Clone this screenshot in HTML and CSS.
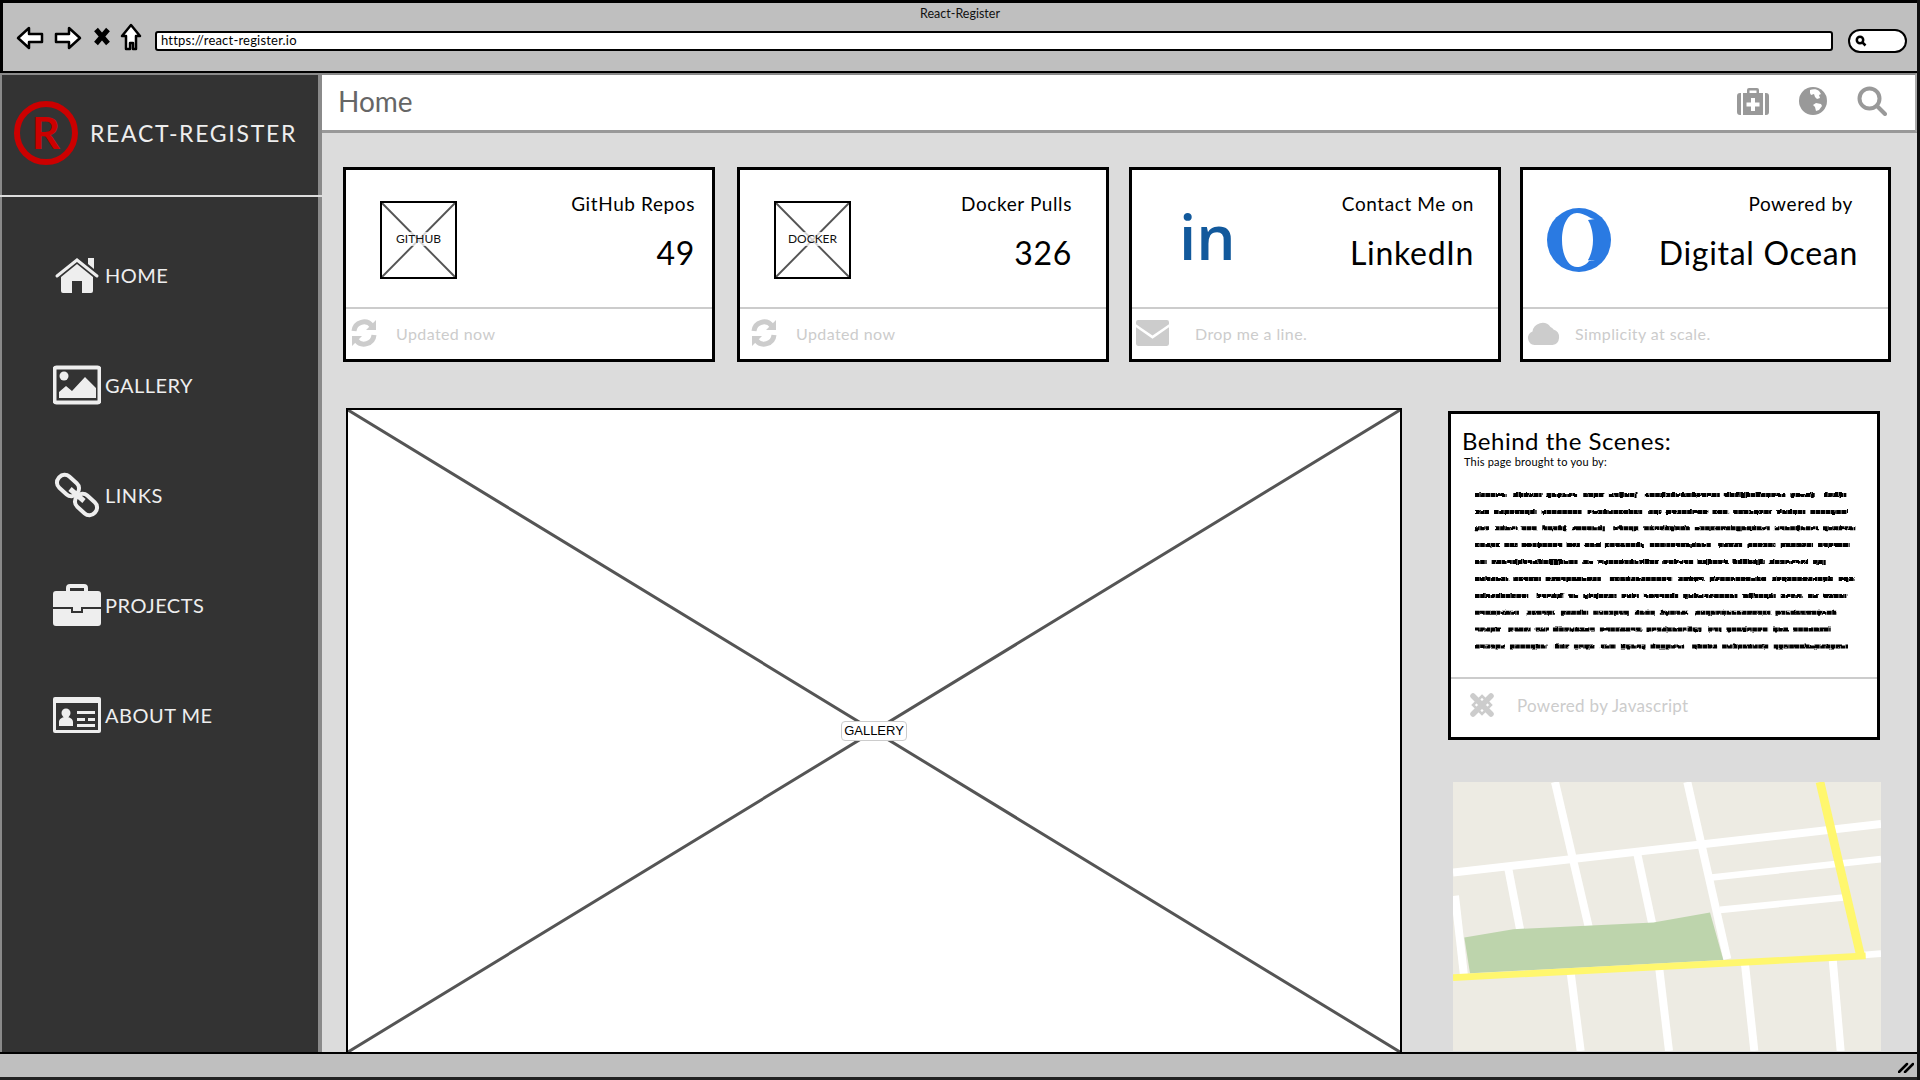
FILE: index.html
```html
<!DOCTYPE html>
<html lang="en">
<head>
  <meta charset="UTF-8" />
  <meta name="viewport" content="width=device-width, initial-scale=1.0" />
  <title>React-Register</title>
  <link rel="stylesheet" href="styles.css">
</head>
<body>
<div class="window">

  <!-- Browser chrome -->
  <header class="toolbar">
    <div class="toolbar-title">React-Register</div>
    <div class="toolbar-row">
      <svg class="tb-back" viewBox="0 0 28 24"><path d="M2 12 13 2v6h13v8H13v6z"/></svg>
      <svg class="tb-forward" viewBox="0 0 28 24"><path d="M26 12 15 2v6H2v8h13v6z"/></svg>
      <svg class="tb-close" viewBox="0 0 16 18"><path d="M2 2 14 16M14 2 2 16"/></svg>
      <svg class="tb-home" viewBox="0 0 22 28"><path d="M11 2 2 13h4v13h4v-6h3v6h3V13h4z"/></svg>
      <div class="url-bar">https://react-register.io</div>
      <div class="search-pill">
        <svg viewBox="0 0 12 12"><circle cx="5" cy="5" r="3.2"/><path d="m7.5 7.5 3 3"/></svg>
      </div>
    </div>
  </header>

  <div class="app">

    <!-- Sidebar -->
    <aside class="sidebar">
      <div class="brand">
        <div class="brand-logo">R</div>
        <div class="brand-name">REACT-REGISTER</div>
      </div>
      <nav class="nav">
        <a class="nav-item">
          <svg class="nav-icon" viewBox="0 0 48 40"><path d="M8 22 24 9l16 13v14a2 2 0 0 1-2 2H29V26H19v12H10a2 2 0 0 1-2-2z"/><path d="M35 3h6v11l-6-5z"/><path class="nav-roof" d="M4 21 24 5l20 16"/></svg>
          <span>HOME</span>
        </a>
        <a class="nav-item">
          <svg class="nav-icon" viewBox="0 0 48 38"><rect class="nav-frame" x="1.5" y="1.5" width="45" height="35" rx="2"/><circle cx="11" cy="10" r="4.5"/><path d="M6 32v-6l7-6 6 5 13-14 11 11v10z"/></svg>
          <span>GALLERY</span>
        </a>
        <a class="nav-item">
          <svg class="nav-icon" viewBox="0 0 48 46"><g class="nav-frame"><rect x="3" y="6" width="24" height="15" rx="7" transform="rotate(42 15 13.5)"/><rect x="21" y="25" width="24" height="15" rx="7" transform="rotate(42 33 32.5)"/></g><path class="nav-link" d="m17 17 14 12"/></svg>
          <span>LINKS</span>
        </a>
        <a class="nav-item">
          <svg class="nav-icon" viewBox="0 0 48 42"><path class="nav-frame" d="M15 8V4a2 2 0 0 1 2-2h14a2 2 0 0 1 2 2v4"/><path d="M0 10a3 3 0 0 1 3-3h42a3 3 0 0 1 3 3v13H0zM0 25h18v4h12v-4h18v14a3 3 0 0 1-3 3H3a3 3 0 0 1-3-3z"/><path d="M20 23h8v4h-8z"/></svg>
          <span>PROJECTS</span>
        </a>
        <a class="nav-item">
          <svg class="nav-icon" viewBox="0 0 48 36"><rect width="48" height="36" rx="2"/><rect class="nav-hole" x="3" y="6" width="42" height="27"/><circle cx="13" cy="16" r="4.5"/><path d="M6 29v-4c0-3 3-5 7-5s7 2 7 5v4zM24 14h18v3H24zM24 21h8v3h-8zM35 21h7v3h-7zM24 27h18v3H24z"/></svg>
          <span>ABOUT ME</span>
        </a>
      </nav>
    </aside>

    <main class="content">
      <div class="topbar">
        <h1 class="topbar-title">Home</h1>
        <div class="topbar-icons">
          <svg class="tb-icon" viewBox="0 0 32 28"><path d="M10 6V3a2 2 0 0 1 2-2h8a2 2 0 0 1 2 2v3h-2.500V3.500h-7V6z"/><path d="M0 9a3 3 0 0 1 3-3h1v22H3a3 3 0 0 1-3-3zM6 6h20v22H6zM28 6h1a3 3 0 0 1 3 3v16a3 3 0 0 1-3 3h-1z"/><path class="tb-cross" d="M14 11h4v4.500h4.500v4H18V24h-4v-4.500H9.500v-4H14z"/></svg>
          <svg class="tb-icon tb-globe" viewBox="0 0 28 28"><circle cx="14" cy="14" r="14"/><path class="tb-cross" d="M11 3c3-1 7-1 9 1l2 3-2 1 1 3-3 1-2-2-1-3-3 1-1-2zM17 16l5 1 1 2-3 4-3 1-1-4-2-2z"/></svg>
          <svg class="tb-icon tb-search" viewBox="0 0 30 30"><circle cx="12.500" cy="12.500" r="10"/><path d="m20 20 8 8"/></svg>
        </div>
      </div>

      <section class="stats">
        <article class="stat-card stat-github">
          <div class="stat-main">
            <div class="thumb">
              <svg viewBox="0 0 75 77" preserveAspectRatio="none"><path d="M0 0 75 77M75 0 0 77"/></svg>
              <span class="thumb-label">GITHUB</span>
            </div>
            <div class="stat-text">
              <div class="stat-label">GitHub Repos</div>
              <div class="stat-value">49</div>
            </div>
          </div>
          <div class="stat-foot">
            <svg class="foot-icon" viewBox="0 0 28 28"><path class="foot-line" d="M4 12a10 10 0 0 1 18-5M24 16a10 10 0 0 1-18 5"/><path d="m26 1 0 10-10 0zM2 27l0-10 10 0z"/></svg>
            <span>Updated now</span>
          </div>
        </article>

        <article class="stat-card stat-docker">
          <div class="stat-main">
            <div class="thumb">
              <svg viewBox="0 0 75 77" preserveAspectRatio="none"><path d="M0 0 75 77M75 0 0 77"/></svg>
              <span class="thumb-label">DOCKER</span>
            </div>
            <div class="stat-text">
              <div class="stat-label">Docker Pulls</div>
              <div class="stat-value">326</div>
            </div>
          </div>
          <div class="stat-foot">
            <svg class="foot-icon" viewBox="0 0 28 28"><path class="foot-line" d="M4 12a10 10 0 0 1 18-5M24 16a10 10 0 0 1-18 5"/><path d="m26 1 0 10-10 0zM2 27l0-10 10 0z"/></svg>
            <span>Updated now</span>
          </div>
        </article>

        <article class="stat-card stat-linkedin">
          <div class="stat-main">
            <div class="linkedin-mark">in</div>
            <div class="stat-text">
              <div class="stat-label">Contact Me on</div>
              <div class="stat-value">LinkedIn</div>
            </div>
          </div>
          <div class="stat-foot">
            <svg class="foot-icon foot-mail" viewBox="0 0 32 25"><path d="M2 0h28a2 2 0 0 1 2 2v2L16 15 0 4V2a2 2 0 0 1 2-2zM0 7l16 11L32 7v16a2 2 0 0 1-2 2H2a2 2 0 0 1-2-2z"/></svg>
            <span>Drop me a line.</span>
          </div>
        </article>

        <article class="stat-card stat-ocean">
          <div class="stat-main">
            <svg class="ocean-mark" viewBox="0 0 64 64"><ellipse cx="32" cy="32" rx="32" ry="32"/><path class="ocean-cut" d="M30 5C21 5 15 17 15 32s6 27 15 27c4 0 9-2 12-6l6-1c-4 0-7 1-7 0 3-5 5-12 5-20s-2-15-5-20l7-1c-3 1-10-6-18-6z"/></svg>
            <div class="stat-text">
              <div class="stat-label">Powered by</div>
              <div class="stat-value">Digital Ocean</div>
            </div>
          </div>
          <div class="stat-foot">
            <svg class="foot-icon foot-cloud" viewBox="0 0 32 24"><path d="M7 24a7 7 0 0 1-2-13.500A10 10 0 0 1 23 6a7 7 0 0 1 3 2.500A8 8 0 0 1 25 24z"/></svg>
            <span>Simplicity at scale.</span>
          </div>
        </article>
      </section>

      <section class="lower">
        <div class="gallery">
          <svg viewBox="0 0 1056 643" preserveAspectRatio="none"><path d="M0 0 1056 643M1056 0 0 643"/></svg>
          <span class="gallery-label">GALLERY</span>
        </div>

        <div class="side">
          <article class="scenes-card">
            <div class="scenes-body">
              <h2 class="scenes-title">Behind the Scenes:</h2>
              <div class="scenes-sub">This page brought to you by:</div>
              <!-- scribbled placeholder copy -->
              <svg class="scribble" viewBox="124 270 1156 486">
                <filter id="wobble" filterUnits="userSpaceOnUse" x="110" y="260" width="1190" height="510">
                  <feTurbulence type="fractalNoise" baseFrequency="0.07" numOctaves="1" seed="4"/>
                  <feDisplacementMap in="SourceGraphic" scale="9" xChannelSelector="R" yChannelSelector="G"/>
                </filter>
                <g filter="url(#wobble)">
                  <path d="M130 285H225M245 285H330M345 285H437M455 285H517M532 285H615M640 285H865M880 285H1062M1077 285H1150M1175 285H1245"/>
                  <path d="M130 336H172M187 336H315M330 336H450M468 336H632M650 336H690M705 336H828M843 336H890M905 336H1022M1037 336H1122M1137 336H1250"/>
                  <path d="M130 385H172M190 385H258M270 385H315M332 385H405M420 385H520M545 385H620M638 385H775M790 385H1015M1030 385H1160M1175 385H1272"/>
                  <path d="M130 435H205M218 435H258M270 435H392M405 435H445M460 435H505M520 435H640M655 435H835M860 435H932M948 435H1032M1048 435H1145M1160 435H1255"/>
                  <path d="M130 486H165M180 486H438M455 486H485M500 486H680M695 486H785M798 486H890M903 486H1000M1015 486H1130M1145 486H1183"/>
                  <path d="M130 537H230M245 537H328M342 537H508M535 537H722M740 537H820M835 537H1005M1020 537H1205M1222 537H1270"/>
                  <path d="M130 588H290M315 588H395M410 588H440M455 588H555M570 588H622M637 588H740M755 588H918M935 588H1033M1048 588H1112M1130 588H1160M1177 588H1245"/>
                  <path d="M130 638H262M285 638H370M388 638H470M485 638H592M610 638H670M685 638H770M792 638H1017M1032 638H1215"/>
                  <path d="M130 689H205M230 689H297M312 689H352M367 689H490M505 689H630M645 689H810M830 689H870M885 689H1010M1025 689H1070M1085 689H1198"/>
                  <path d="M130 740H220M235 740H345M370 740H410M427 740H490M505 740H553M568 740H642M657 740H758M782 740H857M872 740H1012M1027 740H1250"/>
                </g>
              </svg>
            </div>
            <div class="stat-foot scenes-foot">
              <svg class="foot-icon foot-joomla" viewBox="0 0 28 28"><path class="foot-knot" d="M5 5 23 23M23 5 5 23"/><path class="foot-diamond" d="M14 5 23 14 14 23 5 14z"/></svg>
              <span>Powered by Javascript</span>
            </div>
          </article>

          <svg class="map" viewBox="69 69 1284 806" preserveAspectRatio="none">
            <rect x="69" y="69" width="1284" height="806" fill="#edebe3"/>
            <g fill="none" stroke="#fff" stroke-width="24">
              <path d="M69 340 1353 195"/>
              <path d="M375 69 480 520"/>
              <path d="M772 69 892 600"/>
              <path d="M235 330 272 520"/>
              <path d="M622 285 668 500"/>
              <path d="M845 355 1353 300" stroke-width="20"/>
              <path d="M870 452 1240 415" stroke-width="20"/>
              <path d="M75 410 102 650"/>
              <path d="M422 640 452 875"/>
              <path d="M688 630 717 875"/>
              <path d="M945 615 973 875"/>
              <path d="M1208 600 1232 875"/>
              <path d="M1290 588 1353 583" stroke-width="20"/>
            </g>
            <path d="M103 535 250 510 670 490 840 460 880 602 120 642z" fill="#bdd4ac"/>
            <g fill="none" stroke="#fff76e">
              <path d="M1170 69 1293 595" stroke-width="26"/>
              <path d="M69 655 1307 590" stroke-width="20"/>
            </g>
          </svg>
        </div>
      </section>
    </main>
  </div>

  <footer class="statusbar">
    <svg viewBox="0 0 16 12"><path d="M1 11 9 3M7 11l8-8"/></svg>
  </footer>
</div>
</body>
</html>
```

FILE: styles.css
```css
* {
  box-sizing: border-box;
}

body {
  margin: 0;
  font-family: 'Lato', 'Open Sans', sans-serif;
  color: #000;
  background: #dcdcdc;
}

.window {
  display: flex;
  flex-direction: column;
  height: 1080px;
  overflow: hidden;
  border-right: 3px solid #111;
}

/* Browser chrome */
.toolbar {
  height: 73px;
  flex: none;
  background: #bfbfbf;
  border: 3px solid #000;
  border-right: 0;
  border-bottom-width: 2px;
}

.toolbar-title {
  height: 19px;
  line-height: 21px;
  text-align: center;
  font-size: 12.500px;
  color: #111;
}

.toolbar-row {
  display: flex;
  align-items: center;
  height: 30px;
  margin-top: 2px;
  padding-left: 13px;
}

.toolbar-row svg {
  flex: none;
  fill: #fff;
  stroke: #000;
  stroke-width: 2.500;
  stroke-linejoin: round;
}

.tb-back {
  width: 28px;
  height: 24px;
  margin-top: -2px;
}

.tb-forward {
  width: 28px;
  height: 24px;
  margin: -2px 0 0 10px;
}

.toolbar-row .tb-close {
  width: 16px;
  height: 19px;
  margin-left: 12px;
  margin-top: -5px;
  stroke-width: 5;
  stroke-linejoin: miter;
}

.tb-home {
  width: 22px;
  height: 28px;
  margin-left: 10px;
  margin-top: -4px;
}

.url-bar {
  width: 1678px;
  height: 20px;
  margin: 4px 0 0 13px;
  padding-left: 4px;
  background: #fff;
  border: 2.500px solid #000;
  border-radius: 3px;
  font-size: 13px;
  letter-spacing: 0.200px;
  line-height: 15px;
}

.search-pill {
  display: flex;
  align-items: center;
  width: 59px;
  height: 24px;
  margin: 4px 0 0 15px;
  padding-left: 5px;
  background: #fff;
  border: 2px solid #000;
  border-radius: 12px;
}

.toolbar-row .search-pill svg {
  width: 12px;
  height: 12px;
  fill: none;
}

.app {
  display: flex;
  flex: 1;
  min-height: 0;
}

/* Sidebar */
.sidebar {
  flex: none;
  width: 322px;
  background: #333;
  border: solid #8a8a8a;
  border-width: 2px 4px 0 2px;
  color: #eee;
}

.brand {
  display: flex;
  align-items: center;
  height: 122px;
  margin: 0 -4px 0 -2px;
  padding: 0 0 0 14px;
  border-bottom: 2px solid #ddd;
}

.brand-logo {
  flex: none;
  width: 64px;
  height: 64px;
  margin-top: -4px;
  border: 6px solid #c00;
  border-radius: 50%;
  color: #c00;
  font-size: 44px;
  font-weight: 700;
  line-height: 50px;
  text-align: center;
}

.brand-name {
  margin: -4px 0 0 12px;
  font-size: 23px;
  letter-spacing: 1.700px;
}

.nav {
  padding-top: 23px;
}

.nav-item {
  display: flex;
  align-items: center;
  gap: 4px;
  height: 110px;
  padding-left: 51px;
  font-size: 20px;
  letter-spacing: 0.500px;
}

.nav-icon {
  flex: none;
  width: 48px;
  height: 48px;
  fill: #eee;
}

.nav-roof,
.nav-frame,
.nav-link {
  fill: none;
  stroke: #eee;
  stroke-width: 3;
}

.nav-roof {
  stroke-linecap: round;
}

.nav-frame {
  stroke-width: 4;
}

.nav-link {
  stroke-width: 5;
}

.nav-hole {
  fill: #333;
}

/* Top bar */
.content {
  display: flex;
  flex: 1;
  flex-direction: column;
  min-width: 0;
  overflow: hidden;
  background: #dcdcdc;
}

.topbar {
  display: flex;
  flex: none;
  align-items: center;
  justify-content: space-between;
  height: 60px;
  padding: 0 28px 4px 16px;
  background: #fff;
  border-top: 2px solid #8a8a8a;
  border-right: 2px solid #aaa;
  border-bottom: 3px solid #999;
}

.topbar-title {
  margin: 0;
  font-size: 28px;
  font-weight: 400;
  color: #666;
}

.topbar-icons {
  display: flex;
  align-items: center;
  gap: 30px;
}

.tb-icon {
  width: 32px;
  height: 28px;
  fill: #999;
}

.tb-globe {
  width: 28px;
}

.tb-search {
  width: 30px;
  height: 30px;
  fill: none;
  stroke: #999;
  stroke-width: 4;
  stroke-linecap: round;
}

.tb-cross {
  fill: #fff;
}

/* Stat cards */
.stats {
  display: flex;
  flex: none;
  gap: 20px;
  padding: 34px 0 0 21px;
}

.stat-card {
  display: flex;
  flex-direction: column;
  flex: none;
  width: 372px;
  height: 195px;
  background: #fff;
  border: 3px solid #000;
}

.stat-github {
  margin-right: 2px;
}

.stat-ocean {
  margin-left: -1px;
  width: 371px;
}

.stat-main {
  position: relative;
  display: flex;
  flex: 1;
  justify-content: space-between;
}

.stat-text {
  padding-top: 22px;
  text-align: right;
}

.stat-github .stat-text {
  padding-right: 17px;
}

.stat-docker .stat-text {
  padding-right: 34px;
}

.stat-linkedin .stat-text {
  padding-right: 24px;
}

.stat-ocean .stat-text {
  padding-right: 30px;
}

.stat-ocean .stat-label {
  padding-right: 5px;
}

.stat-label {
  font-size: 19px;
  letter-spacing: 0.600px;
  line-height: 24px;
}

.stat-value {
  margin-top: 18px;
  font-size: 32px;
  letter-spacing: 0.700px;
  line-height: 38px;
}

.stat-foot {
  display: flex;
  flex: none;
  align-items: center;
  height: 52px;
  padding: 0 0 2px 4px;
  border-top: 2px solid #ccc;
  font-size: 16px;
  letter-spacing: 0.400px;
  color: #ccc;
}

.stat-docker .stat-foot {
  padding-left: 10px;
}

.foot-icon {
  flex: none;
  width: 28px;
  height: 28px;
  margin-right: 18px;
  fill: #ccc;
}

.foot-line {
  fill: none;
  stroke: #ccc;
  stroke-width: 5;
}

.foot-mail {
  width: 33px;
  height: 26px;
  margin-right: 26px;
}

.foot-cloud {
  width: 33px;
  height: 24px;
  margin-right: 15px;
}

.thumb {
  position: relative;
  flex: none;
  width: 77px;
  height: 78px;
  margin: 31px 0 0 34px;
  border: 2px solid #000;
}

.thumb svg {
  display: block;
  width: 100%;
  height: 100%;
  fill: none;
  stroke: #555;
  stroke-width: 2;
}

.thumb-label {
  position: absolute;
  top: 29px;
  left: 0;
  right: 0;
  height: 14px;
  background: rgba(255, 255, 255, 0.75);
  font-size: 12px;
  line-height: 14px;
  text-align: center;
  color: #111;
}

.linkedin-mark {
  flex: none;
  margin: 21px 0 0 47px;
  font-family: 'Open Sans', sans-serif;
  font-size: 62px;
  font-weight: 600;
  line-height: 90px;
  color: #12599c;
}

.ocean-mark {
  flex: none;
  width: 64px;
  height: 64px;
  margin: 38px 0 0 24px;
  fill: #2a7ae2;
}

.ocean-cut {
  fill: #fff;
}

/* Lower row */
.lower {
  display: flex;
  flex: 1;
  min-height: 0;
  gap: 46px;
  padding: 46px 0 0 24px;
}

.gallery {
  position: relative;
  flex: none;
  width: 1056px;
  border: 2px solid #000;
  border-bottom: 0;
}

.gallery,
.scenes-card {
  background: #fff;
}

.gallery svg {
  display: block;
  width: 100%;
  height: 100%;
  fill: none;
  stroke: #555;
  stroke-width: 3;
}

.gallery-label {
  position: absolute;
  top: 311px;
  left: 493px;
  width: 66px;
  height: 20px;
  background: #fff;
  border: 1px solid #ccc;
  border-radius: 4px;
  font-family: 'Liberation Sans', sans-serif;
  font-size: 13px;
  line-height: 18px;
  text-align: center;
}

.side {
  display: flex;
  flex: 1;
  flex-direction: column;
  min-width: 0;
  padding-top: 3px;
}

.scenes-card {
  display: flex;
  flex: none;
  flex-direction: column;
  width: 432px;
  height: 329px;
  border: 3px solid #000;
}

.scenes-body {
  flex: 1;
  padding: 13px 0 0 11px;
}

.scenes-title {
  margin: 0;
  font-size: 24px;
  font-weight: 400;
  letter-spacing: 0.500px;
  line-height: 28px;
}

.scenes-sub {
  padding-left: 2px;
  font-size: 11px;
  letter-spacing: 0.200px;
  line-height: 13px;
}

.scribble {
  display: block;
  width: 385px;
  height: 162px;
  margin: 22px 0 0 11px;
  fill: none;
  stroke: #000;
  stroke-width: 12;
  stroke-dasharray: 14 1.500;
}

.scenes-foot {
  height: 60px;
  padding: 0 0 6px 17px;
  font-size: 17px;
  letter-spacing: 0.300px;
}

.foot-joomla {
  margin-right: 21px;
}

.foot-knot,
.foot-diamond {
  fill: none;
  stroke: #ccc;
  stroke-width: 5.500;
  stroke-linecap: round;
}

.foot-diamond {
  stroke-width: 2.500;
}

.map {
  flex: none;
  width: 428px;
  height: 269px;
  margin: 42px 0 0 5px;
}

.statusbar {
  display: flex;
  flex: none;
  align-items: center;
  justify-content: flex-end;
  height: 28px;
  padding: 3px 3px 0 0;
  background: #bfbfbf;
  border-top: 2px solid #000;
  border-bottom: 3px solid #222;
}

.statusbar svg {
  width: 16px;
  height: 12px;
  fill: none;
  stroke: #000;
  stroke-width: 2.500;
  stroke-linecap: round;
}
```
